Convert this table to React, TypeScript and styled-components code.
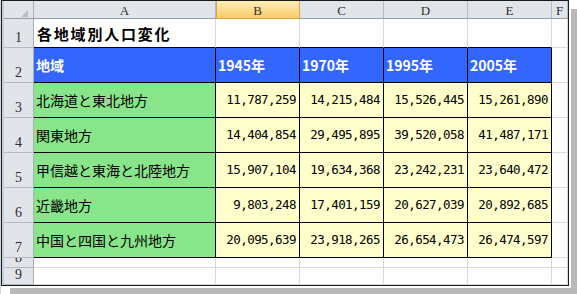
import styled, { createGlobalStyle } from "styled-components";

const GlobalStyle = createGlobalStyle`
  html, body {
    margin: 0;
    padding: 0;
    background: #fff;
  }
`;

type Fill = "white" | "blue" | "green" | "yellow";

const fills: Record<Fill, string> = {
  white: "#ffffff",
  blue: "#3366ff",
  green: "#89e589",
  yellow: "#ffffcc",
};

const Stage = styled.div`
  width: 577px;
  height: 294px;
  overflow: hidden;
  border-left: 1px solid #d6d6d6;
  box-sizing: border-box;
`;

const Frame = styled.div`
  display: flex;
  width: 566px;
  height: 284px;
  border: 1px solid #1b1b1b;
  overflow: hidden;
  background: #fff;
  box-shadow: 2px 2px 0 #fff, 9px 9px 0 #b9b9b9;
`;

const LeftStrip = styled.div`
  width: 2px;
  flex: none;
  background: #c6d2e0;
`;

const Sheet = styled.div`
  display: grid;
  grid-template-columns: 30px 182px repeat(4, 84px) 16px;
  grid-template-rows: 18px 29px repeat(6, 35px) 10px 17px;
  font-family: "Noto Sans CJK JP", "Liberation Sans", sans-serif;
`;

const Corner = styled.div`
  box-sizing: border-box;
  display: flex;
  justify-content: flex-end;
  align-items: flex-end;
  padding: 0 5px 1px 0;
  background: #e1e5ea;
  border-right: 1px solid #a7afb9;
  border-bottom: 1px solid #959da8;

  &::after {
    content: "";
    width: 0;
    height: 0;
    border-left: 7px solid transparent;
    border-bottom: 7px solid #b8bec6;
  }
`;

const ColHead = styled.div<{ $active?: boolean }>`
  box-sizing: border-box;
  display: flex;
  justify-content: center;
  align-items: flex-end;
  padding-bottom: 1px;
  font-family: "Liberation Serif", serif;
  font-size: 13px;
  line-height: 1;
  color: #2e2e2e;
  background: ${(p) =>
    p.$active ? "linear-gradient(#fdeeb7, #f7cc68)" : "#e1e5ea"};
  border-right: 1px solid ${(p) => (p.$active ? "#dca644" : "#b3bac3")};
  border-bottom: 1px solid ${(p) => (p.$active ? "#dca644" : "#959da8")};
  box-shadow: ${(p) => (p.$active ? "inset 1px 0 #dca644" : "none")};
  overflow: hidden;
`;

const RowHead = styled.div`
  box-sizing: border-box;
  display: flex;
  justify-content: center;
  align-items: flex-end;
  padding-bottom: 2px;
  font-family: "Liberation Serif", serif;
  font-size: 14px;
  line-height: 1;
  color: #2e2e2e;
  background: #e1e5ea;
  border-right: 1px solid #a7afb9;
  border-bottom: 1px solid #b3bac3;
  overflow: hidden;
`;

const Cell = styled.div<{
  $fill?: Fill;
  $right?: boolean;
  $bottom?: boolean;
  $num?: boolean;
}>`
  box-sizing: border-box;
  display: flex;
  align-items: center;
  justify-content: ${(p) => (p.$num ? "flex-end" : "flex-start")};
  padding: 0 3px 0 2px;
  font-size: 14px;
  line-height: 1;
  color: #000;
  white-space: nowrap;
  overflow: hidden;
  background: ${(p) => fills[p.$fill ?? "white"]};
  border-right: 1px solid ${(p) => (p.$right ? "#000" : "#d9d9d9")};
  border-bottom: 1px solid ${(p) => (p.$bottom ? "#000" : "#d9d9d9")};
`;

const Title = styled.span`
  font-weight: 700;
  font-size: 15px;
  letter-spacing: 1.8px;
  padding-left: 1px;
`;

const HeadLabel = styled.span`
  font-weight: 700;
  color: #fff;
`;

const Figure = styled.span`
  font-family: "DejaVu Sans Mono", "Liberation Mono", monospace;
  font-size: 12.5px;
  letter-spacing: -0.55px;
`;

const columns = ["A", "B", "C", "D", "E", "F"];
const years = ["1945年", "1970年", "1995年", "2005年"];

const regions: [string, string[]][] = [
  ["北海道と東北地方", ["11,787,259", "14,215,484", "15,526,445", "15,261,890"]],
  ["関東地方", ["14,404,854", "29,495,895", "39,520,058", "41,487,171"]],
  ["甲信越と東海と北陸地方", ["15,907,104", "19,634,368", "23,242,231", "23,640,472"]],
  ["近畿地方", ["9,803,248", "17,401,159", "20,627,039", "20,892,685"]],
  ["中国と四国と九州地方", ["20,095,639", "23,918,265", "26,654,473", "26,474,597"]],
];

export default function App() {
  return (
    <>
      <GlobalStyle />
      <Stage>
        <Frame>
          <LeftStrip />
          <Sheet>
            <Corner />
            {columns.map((c) => (
              <ColHead key={c} $active={c === "B"}>
                {c}
              </ColHead>
            ))}

            <RowHead>1</RowHead>
            <Cell $bottom>
              <Title>各地域別人口変化</Title>
            </Cell>
            {years.map((y) => (
              <Cell key={y} $bottom />
            ))}
            <Cell />

            <RowHead>2</RowHead>
            <Cell $fill="blue" $right $bottom>
              <HeadLabel>地域</HeadLabel>
            </Cell>
            {years.map((y) => (
              <Cell key={y} $fill="blue" $right $bottom>
                <HeadLabel>{y}</HeadLabel>
              </Cell>
            ))}
            <Cell />

            {regions.map(([name, values], i) => (
              <>
                <RowHead key={`h${i}`}>{i + 3}</RowHead>
                <Cell key={`n${i}`} $fill="green" $right $bottom>
                  {name}
                </Cell>
                {values.map((v, j) => (
                  <Cell key={`v${i}-${j}`} $fill="yellow" $right $bottom $num>
                    <Figure>{v}</Figure>
                  </Cell>
                ))}
                <Cell key={`f${i}`} />
              </>
            ))}

            {[8, 9].map((r) => (
              <>
                <RowHead key={`h${r}`}>{r}</RowHead>
                {columns.map((c) => (
                  <Cell key={`${c}${r}`} />
                ))}
              </>
            ))}
          </Sheet>
        </Frame>
      </Stage>
    </>
  );
}
